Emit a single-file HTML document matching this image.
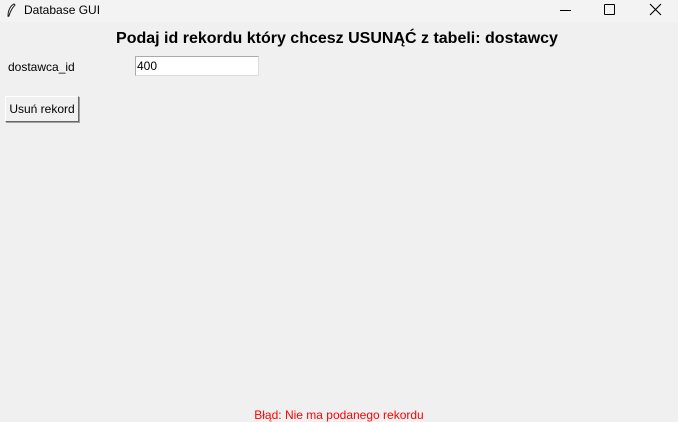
<!DOCTYPE html>
<html><head><style>
body{margin:0;width:678px;height:422px;background:#f0f0f0;font-family:"Liberation Sans",sans-serif;position:relative;overflow:hidden;color:#000}
.a{position:absolute;white-space:nowrap}
</style></head><body>
<div class="a" style="left:0;top:0;width:678px;height:22px;background:#f3f3f3"></div>
<svg class="a" style="left:6px;top:3px" width="10" height="15" viewBox="0 0 10 15"><path d="M8 1C4 3 2 8 2 13L3 13C4 9 6 5 9 2Z" fill="#fff" stroke="#222" stroke-width="1"/><path d="M2 14L6 6" stroke="#222" stroke-width="0.8"/></svg>
<div class="a" style="left:24px;top:3px;font-size:12px">Database GUI</div>
<div class="a" style="left:560px;top:10px;width:11px;height:1px;background:#000"></div>
<div class="a" style="left:604px;top:4px;width:9px;height:9px;border:1px solid #000;border-radius:1px"></div>
<svg class="a" style="left:649px;top:3px" width="13" height="13"><path d="M1 1L12 12M12 1L1 12" stroke="#000" stroke-width="1.1"/></svg>
<div class="a" style="left:0;width:674px;top:30px;text-align:center;font-size:16px;font-weight:bold">Podaj id rekordu który chcesz USUNĄĆ z tabeli: dostawcy</div>
<div class="a" style="left:8px;top:60px;font-size:12px">dostawca_id</div>
<div class="a" style="left:135px;top:56px;height:18px;background:#fff;border:1px solid #aaa;border-right-color:#ddd;border-bottom-color:#ddd;font-size:12px;line-height:18px;padding-left:1px;width:121px">400</div>
<div class="a" style="left:5px;top:96px;width:72px;height:24px;background:#f0f0f0;border:1px solid #fff;border-right-color:#696969;border-bottom-color:#696969;box-shadow:1px 1px 0 #a0a0a0;font-size:12px;line-height:24px;text-align:center">Usuń rekord</div>
<div class="a" style="left:0;width:678px;top:408px;text-align:center;font-size:12px;color:#f00">Błąd: Nie ma podanego rekordu</div>
</body></html>
